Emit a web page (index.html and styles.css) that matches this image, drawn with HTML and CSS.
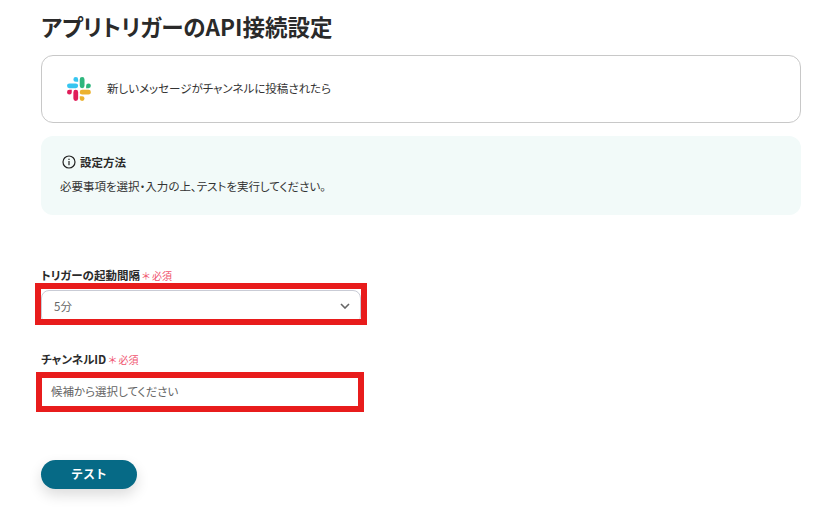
FILE: index.html
```html
<!DOCTYPE html>
<html lang="ja">
<head>
  <meta charset="UTF-8" />
  <title>アプリトリガーのAPI接続設定</title>
  <link rel="stylesheet" href="styles.css">
</head>
<body>
  <main class="page">
    <h1 class="title">アプリトリガーのAPI接続設定</h1>

    <div class="trigger-card">
      <svg class="slack-icon" viewBox="0 0 54 54" width="24" height="24" aria-hidden="true">
        <path fill="#36C5F0" d="M19.712.133a5.381 5.381 0 0 0-5.376 5.387 5.381 5.381 0 0 0 5.376 5.386h5.376V5.52A5.381 5.381 0 0 0 19.712.133m0 14.365H5.376A5.381 5.381 0 0 0 0 19.884a5.381 5.381 0 0 0 5.376 5.387h14.336a5.381 5.381 0 0 0 5.376-5.387 5.381 5.381 0 0 0-5.376-5.386"/>
        <path fill="#2EB67D" d="M53.76 19.884a5.381 5.381 0 0 0-5.376-5.386 5.381 5.381 0 0 0-5.376 5.386v5.387h5.376a5.381 5.381 0 0 0 5.376-5.387m-14.336 0V5.52A5.381 5.381 0 0 0 34.048.133a5.381 5.381 0 0 0-5.376 5.387v14.364a5.381 5.381 0 0 0 5.376 5.387 5.381 5.381 0 0 0 5.376-5.387"/>
        <path fill="#ECB22E" d="M34.048 54a5.381 5.381 0 0 0 5.376-5.387 5.381 5.381 0 0 0-5.376-5.386h-5.376v5.386A5.381 5.381 0 0 0 34.048 54m0-14.365h14.336a5.381 5.381 0 0 0 5.376-5.386 5.381 5.381 0 0 0-5.376-5.387H34.048a5.381 5.381 0 0 0-5.376 5.387 5.381 5.381 0 0 0 5.376 5.386"/>
        <path fill="#E01E5A" d="M0 34.249a5.381 5.381 0 0 0 5.376 5.386 5.381 5.381 0 0 0 5.376-5.386v-5.387H5.376A5.381 5.381 0 0 0 0 34.25m14.336-.001v14.364A5.381 5.381 0 0 0 19.712 54a5.381 5.381 0 0 0 5.376-5.387V34.25a5.381 5.381 0 0 0-5.376-5.387 5.381 5.381 0 0 0-5.376 5.387"/>
      </svg>
      <span class="trigger-text">新しいメッセージがチャンネルに投稿されたら</span>
    </div>

    <div class="info">
      <div class="info-head">
        <svg viewBox="0 0 14 14" width="14" height="14" aria-hidden="true">
          <circle cx="7" cy="7" r="6" fill="none" stroke="#222" stroke-width="1.2"/>
          <rect x="6.4" y="6" width="1.2" height="4.2" fill="#222"/>
          <rect x="6.4" y="3.7" width="1.2" height="1.3" fill="#222"/>
        </svg>
        <strong>設定方法</strong>
      </div>
      <p class="info-body">必要事項を選択・入力の上、テストを実行してください。</p>
    </div>

    <div class="field field-interval">
      <div class="field-label">トリガーの起動間隔<span class="required"><span class="star">＊</span>必須</span></div>
      <div class="control control-select">
        <span>5分</span>
        <svg viewBox="0 0 10 6" width="10" height="6" aria-hidden="true">
          <path d="M1 1l4 4 4-4" fill="none" stroke="#666" stroke-width="1.6"/>
        </svg>
        <div class="mark mark-select"></div>
      </div>
    </div>

    <div class="field field-channel">
      <div class="field-label">チャンネルID<span class="required"><span class="star">＊</span>必須</span></div>
      <div class="control control-input">
        <span>候補から選択してください</span>
        <div class="mark mark-input"></div>
      </div>
    </div>

    <button class="test-button">テスト</button>
  </main>
</body>
</html>
```

FILE: styles.css
```css
* {
  box-sizing: border-box;
}

html, body {
  height: 100%;
}

body {
  margin: 0;
  background: #fff;
  color: #2a2a2a;
  font-family: "Noto Sans CJK JP", "Noto Sans", sans-serif;
  font-feature-settings: "palt";
  overflow: hidden;
}

.page {
  width: 760px;
  margin-left: 41px;
  padding-top: 10px;
}

.title {
  height: 32px;
  margin: 0;
  font-size: 22.5px;
  line-height: 32px;
  font-weight: 700;
  color: #2a2a2a;
}

.trigger-card {
  display: flex;
  align-items: center;
  gap: 16px;
  height: 68px;
  margin-top: 13px;
  padding-left: 25px;
  border: 1px solid #c8c8c8;
  border-radius: 12px;
}

.trigger-text {
  padding-bottom: 2px;
  font-size: 11.5px;
  color: #333;
}

.info {
  height: 79px;
  margin-top: 13px;
  padding: 18px 19px 0;
  background: #f2faf9;
  border-radius: 12px;
}

.info-head {
  display: flex;
  align-items: center;
  gap: 4px;
  padding-left: 2px;
  font-size: 11.5px;
  line-height: 16px;
}

.info-body {
  margin: 8px 0 0;
  font-size: 11.5px;
  line-height: 16px;
  color: #333;
}

.field {
  width: 320px;
}

.field-interval {
  margin-top: 52px;
}

.field-channel {
  margin-top: 27px;
}

.field-label {
  height: 16px;
  font-size: 11.5px;
  line-height: 16px;
  font-weight: 700;
  color: #2a2a2a;
}

.required {
  margin-left: 2px;
  font-size: 10px;
  line-height: 1;
  font-weight: 400;
  color: #f0536e;
}

.star {
  margin-right: 2px;
  font-size: 10px;
}

.control {
  position: relative;
  display: flex;
  align-items: center;
  font-size: 11.5px;
  color: #666;
}

.control-select {
  justify-content: space-between;
  height: 34px;
  margin-top: 7px;
  padding: 0 10px 2px 12px;
  border: 1px solid #c9ccd6;
  border-radius: 8px;
}

.control-input {
  height: 30px;
  margin-top: 10px;
  padding: 0 0 2px 9px;
  border: 1px solid #c9ccd6;
}

/* red highlight frames drawn over the controls */
.mark {
  position: absolute;
  border: 6px solid #e81c1c;
}

.mark-select {
  left: -7px;
  top: -8px;
  width: 332px;
  height: 42px;
}

.mark-input {
  left: -6px;
  top: -6px;
  width: 328px;
  height: 40px;
}

.test-button {
  display: block;
  width: 96px;
  height: 29px;
  margin-top: 53px;
  padding: 0 0 2px;
  border: none;
  border-radius: 15px;
  background: #066a86;
  color: #fff;
  font-family: inherit;
  font-size: 12px;
  font-weight: 700;
  box-shadow: 0 6px 14px rgba(0, 0, 0, 0.14);
}
```
